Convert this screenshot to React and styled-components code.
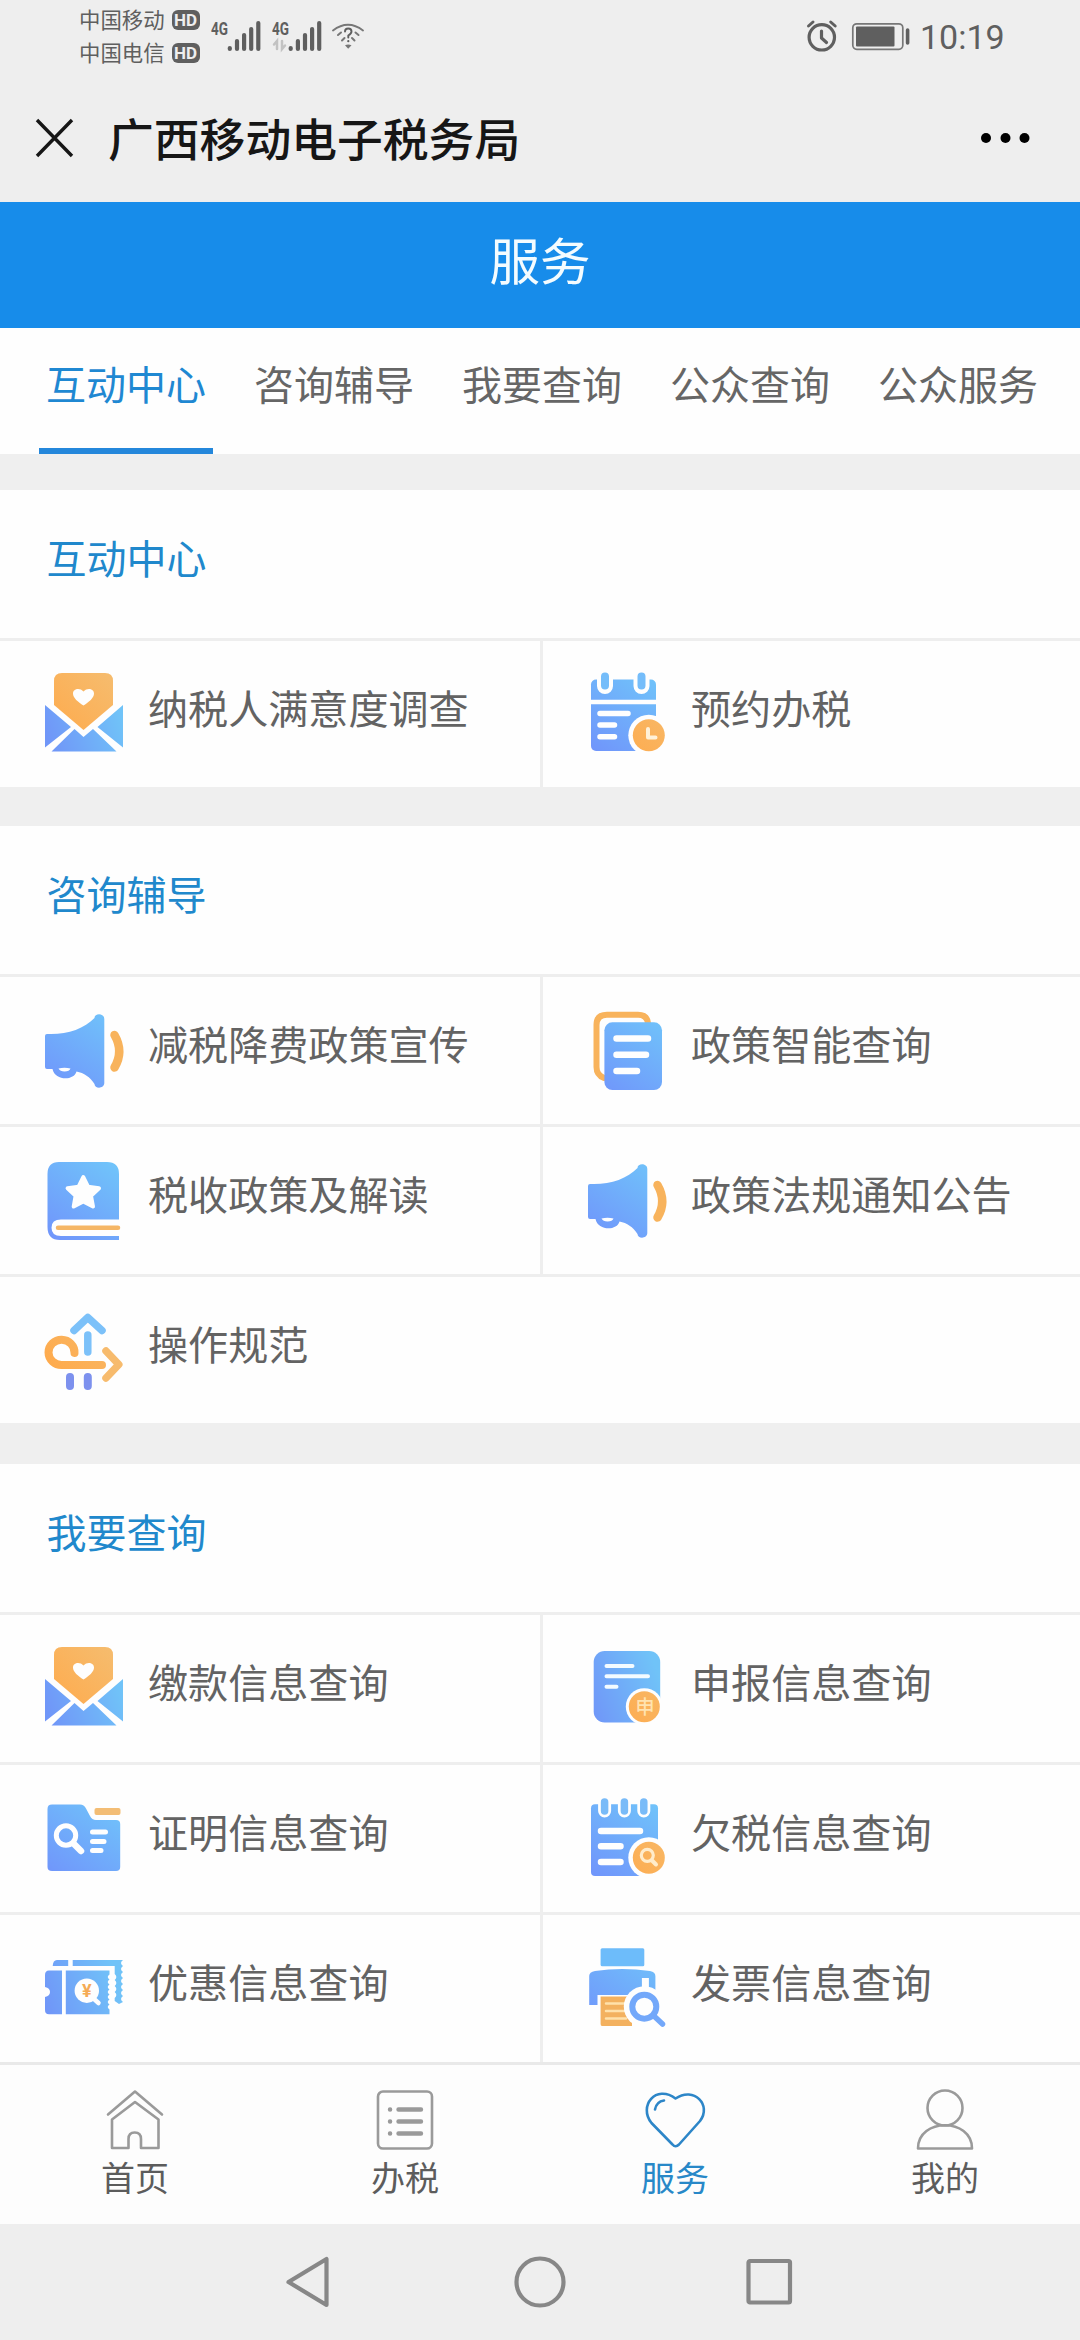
import styled, { createGlobalStyle } from 'styled-components';

const GlobalStyle = createGlobalStyle`
    * {
        box-sizing: border-box;
    }
    body {
        margin: 0;
        background-color: #efefef;
        font-family: 'Noto Sans CJK SC', sans-serif;
    }
    svg {
        display: block;
        overflow: visible;
        flex-shrink: 0;
    }
`

const Screen = styled.div`
    width: 1080px;
    height: 2340px;
    display: flex;
    flex-direction: column;
    overflow: hidden;
    background-color: #efefef;
`

const StatusBar = styled.div`
    height: 76px;
    display: flex;
    justify-content: space-between;
    padding: 0 78px 0 79px;
    background-color: #eeeeee;
    color: #5f5f5f;
`

const StatusSide = styled.div`
    display: flex;
    align-items: flex-start;
`

const Carriers = styled.div`
    width: 132px;
    padding-top: 3px;
`

const Carrier = styled.div`
    height: 33px;
    display: flex;
    align-items: center;
    gap: 7px;
    font-size: 21.4px;
    line-height: 30px;
    white-space: nowrap;
    span{
        padding-bottom: 2px;
    }
`

const HdBadge = styled.i`
    width: 28px;
    height: 20px;
    border-radius: 6px;
    background-color: #5f5f5f;
    color: #eeeeee;
    font-family: Roboto, sans-serif;
    font-size: 17px;
    font-style: normal;
    font-weight: 700;
    line-height: 20px;
    text-align: center;
`

const Clock = styled.div`
    width: 82px;
    margin-left: 10px;
    padding-top: 17px;
    font-family: Roboto, sans-serif;
    font-size: 34px;
    line-height: 40px;
`

const TitleBar = styled.div`
    height: 126px;
    display: flex;
    align-items: center;
    padding: 0 50px 3px 36px;
    background-color: #eeeeee;
    h1{
        flex: 1;
        margin: 0 0 0 35px;
        padding-bottom: 1px;
        color: #161616;
        font-size: 45.8px;
        font-weight: 500;
        line-height: 60px;
    }
`

const PageHeader = styled.header`
    height: 126px;
    padding-bottom: 14px;
    display: flex;
    justify-content: center;
    align-items: center;
    background-color: #178cea;
    color: #f4fcff;
    font-size: 50.5px;
    line-height: 70px;
`

const Tabs = styled.nav`
    height: 126px;
    display: flex;
    gap: 34px;
    padding-left: 39px;
    background-color: #fefefe;
`

const Tab = styled.div`
    width: 174px;
    padding-top: 26px;
    border-bottom: 6px solid ${props => props.$active ? '#2487db' : 'transparent'};
    color: ${props => props.$active ? '#1f88d2' : '#666666'};
    font-size: 40px;
    line-height: 58px;
    text-align: center;
    white-space: nowrap;
`

const Content = styled.main`
    height: 1608px;
    display: flex;
    flex-direction: column;
`

const Section = styled.section`
    height: ${props => props.$height}px;
    margin-top: ${props => props.$gap}px;
    overflow: hidden;
    background-color: #fefefe;
    h2{
        height: 148px;
        margin: 0;
        padding: 38px 0 0 46.5px;
        color: #2088cc;
        font-size: 40px;
        font-weight: 400;
        line-height: 58px;
    }
`

const Grid = styled.div`
    display: grid;
    grid-template-columns: 543px 537px;
    grid-auto-rows: 150px;
`

const Item = styled.div`
    display: flex;
    padding: 32px 0 0 44px;
    border-top: 3px solid #eeeeee;
    border-right: ${props => props.$divided ? '3px solid #eeeeee' : 'none'};
    grid-column: ${props => props.$wide ? '1 / 3' : 'auto'};
    span{
        margin: 5px 0 0 24px;
        color: #636363;
        font-size: 40.1px;
        line-height: 58px;
        white-space: nowrap;
    }
`

const BottomNav = styled.nav`
    height: 162px;
    display: grid;
    grid-template-columns: repeat(4, 1fr);
    border-top: 3px solid #e9e9e9;
    background-color: #fdfdfd;
`

const NavItem = styled.div`
    display: flex;
    flex-direction: column;
    align-items: center;
    padding-top: 24px;
    color: ${props => props.$active ? '#2888c8' : '#5c5c5c'};
    font-size: 34px;
    line-height: 50px;
    svg{
        margin-bottom: 1px;
    }
`

const SystemNav = styled.div`
    height: 116px;
    display: flex;
    justify-content: center;
    align-items: center;
    gap: 178px;
    background-color: #eeeeee;
`

/* ---------- gradients shared by the service icons ---------- */

const GradientDefs = styled.svg`
    position: absolute;
`

function Gradients() {
    return (
        <GradientDefs width="0" height="0">
            <defs>
                <linearGradient id="blue" gradientUnits="userSpaceOnUse" x1="12" y1="80" x2="66" y2="4">
                    <stop offset="0" stopColor="#7096fb" />
                    <stop offset="1" stopColor="#70c3fa" />
                </linearGradient>
                <linearGradient id="blueAcross" gradientUnits="userSpaceOnUse" x1="4" y1="66" x2="76" y2="40">
                    <stop offset="0" stopColor="#7096f8" />
                    <stop offset="1" stopColor="#70c3f8" />
                </linearGradient>
                <linearGradient id="orange" gradientUnits="userSpaceOnUse" x1="10" y1="70" x2="70" y2="10">
                    <stop offset="0" stopColor="#ffa94a" />
                    <stop offset="1" stopColor="#f6bb6c" />
                </linearGradient>
            </defs>
        </GradientDefs>
    )
}

const Icon = ({ children }) => (
    <svg width="80" height="80" viewBox="0 0 80 80" fill="none" strokeLinecap="round" strokeLinejoin="round">
        {children}
    </svg>
)

const Envelope = () => (
    <Icon>
        <path d="M1 32L27 54L1 74.500Z M79 32L53.500 54L79 74.500Z M7.500 78.500L30.500 56L39.500 64L49 56L72.500 78.500Z" fill="url(#blueAcross)" />
        <path d="M18 0H61Q69 0 69 8V32L39.500 57L10 32V8Q10 0 18 0Z" fill="url(#orange)" />
        <path d="M39.500 32.500C34 29 29 25 29 20.500C29 15.500 36 14.500 39.500 18.500C43 14.500 50 15.500 50 20.500C50 25 45 29 39.500 32.500Z" fill="#fefefe" />
    </Icon>
)

const Calendar = () => (
    <Icon>
        <rect x="4" y="6.500" width="65" height="71.500" rx="5" fill="url(#blue)" />
        <path d="M4 29H69" stroke="#fefefe" strokeWidth="4.500" />
        <path d="M18 3V13M54.500 3V13" stroke="#fefefe" strokeWidth="16" />
        <path d="M18 3.500V12.500M54.500 3.500V12.500" stroke="#75bdfa" strokeWidth="8" />
        <path d="M13 40.500H41M13 52H27.500M13 63.800H27.500" stroke="#fefefe" strokeWidth="5.500" />
        <circle cx="61.800" cy="62.300" r="20.500" fill="#fefefe" />
        <circle cx="61.800" cy="62.300" r="16" fill="url(#orange)" />
        <path d="M61 56V64.500H68.500" stroke="#fff1d8" strokeWidth="4" />
    </Icon>
)

const Megaphone = () => (
    <Icon>
        <path d="M3 25C22 26 40 20 50.500 9C50.500 4 60.300 4 60.300 10V74C60.300 80 50.500 80 50.500 75C46 68 40 64 32.500 62.500C30 72 11 72 8.500 60H3Q1 60 1 58V27Q1 25 3 25Z" fill="url(#blue)" />
        <path d="M14.500 59.500Q20.500 58 26.500 59.500Q25.500 62.500 20.500 62.500Q16 62.500 14.500 59.500Z" fill="#fefefe" />
        <path d="M70.500 26Q80 42.500 70.500 58.500" stroke="#f8b35c" strokeWidth="8.500" />
    </Icon>
)

const Documents = () => (
    <Icon>
        <path d="M61 14Q60 5.700 51 5.700H20Q9.500 5.700 9.500 16V58Q9.500 66 17 69" stroke="#f8b35c" strokeWidth="6" />
        <rect x="17.400" y="13.300" width="57.600" height="67.700" rx="8" fill="url(#blue)" />
        <path d="M29.500 29.400H61M29.500 45.700H59M29.500 62H50" stroke="#fefefe" strokeWidth="6.500" />
    </Icon>
)

const Book = () => (
    <Icon>
        <path d="M15 3H63Q75 3 75 15V60.500H17Q7.500 60.500 7.500 68.700Q7.500 77 17 77H75V81H16Q3.500 81 3.500 68V15Q3.500 3 15 3Z" fill="url(#blue)" />
        <path d="M14 68.700H74" stroke="#f5b666" strokeWidth="4.500" />
        <path d="M39.300 18L44 27.700L55 29.200L47 36.800L49 47.500L39.300 42.500L29.700 47.500L31.600 36.800L23.600 29.200L34.600 27.700Z" fill="#fefefe" stroke="#fefefe" strokeWidth="4" />
    </Icon>
)

const Signpost = () => (
    <Icon>
        <path d="M30.500 44A13 12.600 0 1 0 18 56H58" stroke="url(#orange)" strokeWidth="8" />
        <path d="M62 42L74.800 55.500L62 69" stroke="#f7bb6d" strokeWidth="7.500" />
        <path d="M30 21.500L43.800 8.500L58 21.500M43.800 26V43" stroke="#7cc1f9" strokeWidth="7.500" />
        <path d="M26 68V77M43.800 68V77" stroke="#7d91ee" strokeWidth="8" />
    </Icon>
)

const Declaration = () => (
    <Icon>
        <rect x="6.700" y="4" width="66.500" height="71.500" rx="11" fill="url(#blueAcross)" />
        <path d="M19.500 19H45.500M19.500 29.300H61M19.500 39.700H29.500" stroke="#f4fbff" strokeWidth="4" />
        <circle cx="57.300" cy="59.700" r="18.500" fill="#fefefe" />
        <circle cx="57.300" cy="59.700" r="15.500" fill="url(#orange)" />
        <text x="58" y="66.800" textAnchor="middle" fontSize="19" fontWeight="500" fill="#ffe3b0">申</text>
    </Icon>
)

const Folder = () => (
    <Icon>
        <path d="M8 7.600H36Q40 7.600 42 11.500L46 19Q48 23 52 23H72Q76.200 23 76.200 27V70Q76.200 74 72 74H8Q3.500 74 3.500 70V12Q3.500 7.600 8 7.600Z" fill="url(#blue)" />
        <rect x="50.500" y="11" width="26" height="7" rx="2" fill="#f3bd75" />
        <circle cx="22" cy="38.500" r="9.700" stroke="#fefefe" strokeWidth="5" />
        <path d="M29.500 46.500L37 54" stroke="#fefefe" strokeWidth="6.500" />
        <path d="M48.500 35H61.500M48.500 44.400H60M48.500 53.600H57" stroke="#fefefe" strokeWidth="5" />
    </Icon>
)

const Notebook = () => (
    <Icon>
        <rect x="4" y="7.300" width="67" height="71.700" rx="4" fill="url(#blue)" />
        <path d="M17.600 5V14M37.400 5V14M56.800 5V14" stroke="#fefefe" strokeWidth="13" />
        <path d="M17.600 5V14M37.400 5V14M56.800 5V14" stroke="#79bbf8" strokeWidth="7.500" />
        <path d="M14 34H53M14 49.300H33.500M14 65H33.500" stroke="#fefefe" strokeWidth="6.500" />
        <circle cx="61.800" cy="60.700" r="20.500" fill="#fefefe" />
        <circle cx="61.800" cy="60.700" r="16" fill="url(#orange)" />
        <circle cx="60.300" cy="58.300" r="6" stroke="#ffeccb" strokeWidth="3.200" />
        <path d="M65 63.500L69 67.500" stroke="#ffeccb" strokeWidth="4" />
    </Icon>
)

const Ticket = () => (
    <Icon>
        <path d="M13 13H24.200V19H8.700Q9 13 13 13Z M28.700 13H79Q75 16 79 19Q75 22 79 25Q75 28 79 31Q75 34 79 37Q75 40 79 43Q75 46 79 49Q75 52 79 55L75 57L70.700 54V51Q74 48 70.700 45Q74 42 70.700 39Q74 36 70.700 33Q74 30 70.700 27V19H28.700Z" fill="url(#blueAcross)" />
        <path d="M5 23.400H18V67.300H5Q1 67.300 1 63V50Q6 49 6 45Q6 41 1 40V28Q1 23.400 5 23.400Z M21.800 23.400H65.500V27.500Q62 30 65.500 32.500Q62 35 65.500 37.500Q62 40 65.500 42.500Q62 45 65.500 47.500Q62 50 65.500 52.500Q62 55 65.500 57.500Q62 60 65.500 62.500V67.300H21.800Z" fill="url(#blueAcross)" />
        <path d="M49 51L54.500 56" stroke="#fefefe" strokeWidth="4.500" />
        <circle cx="42.800" cy="43.700" r="12.200" fill="#fefefe" />
        <text x="42.800" y="50" textAnchor="middle" fontFamily="Roboto, sans-serif" fontSize="18" fontWeight="700" fill="#f5ab55">¥</text>
    </Icon>
)

const Printer = () => (
    <Icon>
        <rect x="13.600" y="1.300" width="43.700" height="18" rx="1.500" fill="#6dbcfa" />
        <path d="M8 24Q35 20 63 24Q68.400 25 68.400 29V58H2.200V29Q2.200 25 8 24Z" fill="url(#blue)" />
        <path d="M10.500 48H48V62H10.500Z" fill="#fefefe" />
        <path d="M58.400 31V42" stroke="#fefefe" strokeWidth="7" strokeLinecap="butt" />
        <path d="M13.600 49.500H45V79H15Q13.600 79 13.600 77Z" fill="#f3b15f" />
        <path d="M19 56.500H39M19 64H39M19 71.500H39" stroke="#ffe1ab" strokeWidth="2.500" />
        <circle cx="57.300" cy="59.700" r="20.500" fill="#fefefe" />
        <circle cx="57.300" cy="59.700" r="12" stroke="#73a8fa" strokeWidth="6" />
        <path d="M67.500 69.500L75.500 77" stroke="#73a8fa" strokeWidth="5.500" />
    </Icon>
)

/* ---------- status bar icons ---------- */

const SignalBars = ({ x }) => (
    <path d={`M${x} 48V49M${x + 7.2} 41V49M${x + 14.3} 35V49M${x + 21.4} 29V49M${x + 28.5} 23V49`} stroke="#5f5f5f" strokeWidth="4.200" />
)

const Signals = () => (
    <svg width="155" height="76" viewBox="211 0 155 76" fill="none" strokeLinecap="round">
        <text x="211" y="34.500" fontFamily="Roboto, sans-serif" fontSize="19" fontWeight="700" fill="#5f5f5f" textLength="17" lengthAdjust="spacingAndGlyphs">4G</text>
        <SignalBars x={229.8} />
        <text x="272" y="34.500" fontFamily="Roboto, sans-serif" fontSize="19" fontWeight="700" fill="#5f5f5f" textLength="17" lengthAdjust="spacingAndGlyphs">4G</text>
        <path d="M277 49V41L274 44.500M282 41V49L285 45.500" stroke="#c2c2c2" strokeWidth="2.500" />
        <SignalBars x={290.7} />
        <path d="M333 30.500Q348 19 363 30.500" stroke="#777777" strokeWidth="1.900" />
        <path d="M338 35L341 32.500M342 40.500L344.500 38M358.500 35L355.500 32.500M354.500 40.500L352 38" stroke="#777777" strokeWidth="2" />
        <path d="M345 31.500Q345 28.500 348.200 28.500Q351.500 28.500 351.500 31.500Q351.500 33.500 348.300 35.500V37.500" stroke="#5f5f5f" strokeWidth="1.900" />
        <path d="M348.300 41V41.200" stroke="#5f5f5f" strokeWidth="2.200" />
        <path d="M345 45.200Q348.200 43.700 351.500 45.200L348.200 48.800Z" fill="#777777" />
    </svg>
)

const AlarmBattery = () => (
    <svg width="104" height="76" viewBox="806 0 104 76" fill="none" strokeLinecap="round" strokeLinejoin="round">
        <circle cx="821.800" cy="37.300" r="12.700" stroke="#5f5f5f" strokeWidth="3.200" />
        <path d="M821.500 31V38L826.500 42.500" stroke="#5f5f5f" strokeWidth="3.200" />
        <path d="M808.500 26L813 22M835.200 26L830.700 22" stroke="#5f5f5f" strokeWidth="3" />
        <rect x="852.800" y="23.800" width="50" height="25.500" rx="4" stroke="#777777" strokeWidth="1.700" />
        <rect x="856" y="26.500" width="38.500" height="20" rx="1" fill="#5f5f5f" />
        <path d="M907.600 30V43" stroke="#5f5f5f" strokeWidth="3.600" />
    </svg>
)

/* ---------- bottom bar icons ---------- */

const NavIcon = ({ children }) => (
    <svg width="60" height="62" viewBox="0 0 60 62" fill="none" stroke="#9a9a9a" strokeWidth="2.600" strokeLinecap="round" strokeLinejoin="round">
        {children}
    </svg>
)

const HomeIcon = () => (
    <NavIcon>
        <path d="M3 25.500L30 2.500L57 25.500" />
        <path d="M7 30.500L30 13L53.500 30.500V59H36V50Q36 43.500 29.700 43.500Q23.500 43.500 23.500 50V59H7Z" />
    </NavIcon>
)

const ListIcon = () => (
    <NavIcon>
        <rect x="3" y="2.500" width="54" height="57" rx="5" />
        <path d="M23.500 20.500H46M23.500 32.500H46M23.500 44.500H46" strokeWidth="4.400" />
        <path d="M15 20.500H15.100M15 32.500H15.100M15 44.500H15.100" strokeWidth="4.400" />
    </NavIcon>
)

const HeartIcon = () => (
    <NavIcon>
        <g stroke="#2d86c8">
            <path d="M27.500 55.500L6.500 34C-7 17 11 -5 30.500 9.500C49 -3 67 16 55 32L34 55.500Q30.500 59 27.500 55.500Z" />
            <path d="M10 20.500Q11.500 12.500 19 11.500" />
        </g>
    </NavIcon>
)

const UserIcon = () => (
    <NavIcon>
        <circle cx="30" cy="19" r="17.500" />
        <path d="M3 59.500C3 28.500 57 28.500 57 59.500Z" />
    </NavIcon>
)

const sections = [
    {
        title: '互动中心',
        height: 297,
        gap: 36,
        items: [
            { label: '纳税人满意度调查', icon: <Envelope /> },
            { label: '预约办税', icon: <Calendar /> },
        ],
    },
    {
        title: '咨询辅导',
        height: 597,
        gap: 39,
        items: [
            { label: '减税降费政策宣传', icon: <Megaphone /> },
            { label: '政策智能查询', icon: <Documents /> },
            { label: '税收政策及解读', icon: <Book /> },
            { label: '政策法规通知公告', icon: <Megaphone /> },
            { label: '操作规范', icon: <Signpost /> },
        ],
    },
    {
        title: '我要查询',
        height: 598,
        gap: 41,
        items: [
            { label: '缴款信息查询', icon: <Envelope /> },
            { label: '申报信息查询', icon: <Declaration /> },
            { label: '证明信息查询', icon: <Folder /> },
            { label: '欠税信息查询', icon: <Notebook /> },
            { label: '优惠信息查询', icon: <Ticket /> },
            { label: '发票信息查询', icon: <Printer /> },
        ],
    },
]

const tabs = ['互动中心', '咨询辅导', '我要查询', '公众查询', '公众服务']

export default function App() {
    return (
        <>
            <GlobalStyle />
            <Gradients />
            <Screen>
                <StatusBar>
                    <StatusSide>
                        <Carriers>
                            <Carrier><span>中国移动</span><HdBadge>HD</HdBadge></Carrier>
                            <Carrier><span>中国电信</span><HdBadge>HD</HdBadge></Carrier>
                        </Carriers>
                        <Signals />
                    </StatusSide>
                    <StatusSide>
                        <AlarmBattery />
                        <Clock>10:19</Clock>
                    </StatusSide>
                </StatusBar>

                <TitleBar>
                    <svg width="37" height="38" viewBox="0 0 37 38" stroke="#161616" strokeWidth="3.400">
                        <path d="M1 1L36 37M36 1L1 37" />
                    </svg>
                    <h1>广西移动电子税务局</h1>
                    <svg width="49" height="10" viewBox="0 0 49 10" fill="#000000">
                        <circle cx="5" cy="5" r="5" />
                        <circle cx="24.500" cy="5" r="5" />
                        <circle cx="43.500" cy="5" r="5" />
                    </svg>
                </TitleBar>

                <PageHeader>服务</PageHeader>

                <Tabs>
                    {tabs.map((tab, i) => (
                        <Tab key={tab} $active={i === 0}>{tab}</Tab>
                    ))}
                </Tabs>

                <Content>
                    {sections.map(section => (
                        <Section key={section.title} $height={section.height} $gap={section.gap}>
                            <h2>{section.title}</h2>
                            <Grid>
                                {section.items.map((item, i) => {
                                    const left = i % 2 === 0
                                    const alone = left && i === section.items.length - 1
                                    return (
                                        <Item key={item.label} $divided={left && !alone} $wide={alone}>
                                            {item.icon}
                                            <span>{item.label}</span>
                                        </Item>
                                    )
                                })}
                            </Grid>
                        </Section>
                    ))}
                </Content>

                <BottomNav>
                    <NavItem><HomeIcon />首页</NavItem>
                    <NavItem><ListIcon />办税</NavItem>
                    <NavItem $active><HeartIcon />服务</NavItem>
                    <NavItem><UserIcon />我的</NavItem>
                </BottomNav>

                <SystemNav>
                    <svg width="52" height="52" viewBox="0 0 52 52" fill="none" stroke="#878787" strokeWidth="4.200" strokeLinejoin="round">
                        <path d="M4.500 26L42.500 3V49Z" />
                    </svg>
                    <svg width="52" height="52" viewBox="0 0 52 52" fill="none" stroke="#878787" strokeWidth="4.200">
                        <circle cx="26" cy="26" r="23.500" />
                    </svg>
                    <svg width="52" height="52" viewBox="0 0 52 52" fill="none" stroke="#878787" strokeWidth="4.200" strokeLinejoin="round">
                        <rect x="4.500" y="5" width="41.500" height="41.500" rx="1.500" />
                    </svg>
                </SystemNav>
            </Screen>
        </>
    )
}
